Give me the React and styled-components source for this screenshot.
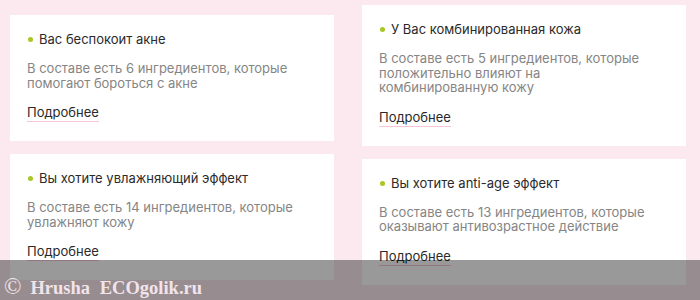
import React from "react";
import styled, { createGlobalStyle } from "styled-components";

const GlobalStyle = createGlobalStyle`
  html, body {
    margin: 0;
    padding: 0;
    background: #fce9ef;
  }
  body {
    font-family: Inter, "Noto Sans", sans-serif;
  }
`;

const Page = styled.div`
  position: relative;
  width: 700px;
  height: 300px;
  overflow: hidden;
  display: flex;
  gap: 28px;
  padding-left: 10px;
  box-sizing: border-box;
`;

const Column = styled.div`
  display: flex;
  flex-direction: column;
  gap: 13px;
  width: 324px;
  padding-top: ${(p) => p.$offset}px;
`;

const Card = styled.article`
  background: #fff;
  padding: 17px 17px 19px;
  display: flex;
  flex-direction: column;
  align-items: flex-start;
`;

const Title = styled.h3`
  margin: 0;
  display: flex;
  align-items: center;
  gap: 6px;
  font-size: 13px;
  line-height: 15px;
  font-weight: 400;
  color: #2a2a2a;

  &:before {
    content: "";
    width: 5px;
    height: 5px;
    border-radius: 50%;
    background: #a6c825;
    margin-left: 1px;
  }
`;

const Text = styled.p`
  margin: 14px 0 0;
  max-width: 280px;
  font-size: 13px;
  line-height: 14.5px;
  color: #858585;
`;

const More = styled.a`
  margin-top: 15px;
  padding-bottom: 1px;
  font-size: 13px;
  line-height: 15px;
  color: #2a2a2a;
  text-decoration: none;
  border-bottom: 1px solid #f7c5d6;
`;

const Watermark = styled.div`
  position: absolute;
  left: 0;
  right: 0;
  bottom: 0;
  height: 40px;
  background: rgba(0, 0, 0, 0.4);
  display: flex;
  align-items: baseline;
  gap: 9px;
  padding: 17px 0 0 4px;
  box-sizing: border-box;
  font-family: "Liberation Serif", serif;
  font-weight: bold;
  font-size: 18.5px;
  line-height: 19px;
  word-spacing: 5px;
  color: #f2e4ea;
`;

const Copy = styled.span`
  font-size: 23px;
  font-weight: normal;
`;

const left = [
  {
    title: "Вас беспокоит акне",
    text: "В составе есть 6 ингредиентов, которые помогают бороться с акне",
  },
  {
    title: "Вы хотите увлажняющий эффект",
    text: "В составе есть 14 ингредиентов, которые увлажняют кожу",
  },
];

const right = [
  {
    title: "У Вас комбинированная кожа",
    text: "В составе есть 5 ингредиентов, которые положительно влияют на комбинированную кожу",
  },
  {
    title: "Вы хотите anti-age эффект",
    text: "В составе есть 13 ингредиентов, которые оказывают антивозрастное действие",
  },
];

const InfoCard = ({ title, text }) => (
  <Card>
    <Title>{title}</Title>
    <Text>{text}</Text>
    <More href="#">Подробнее</More>
  </Card>
);

export default function App() {
  return (
    <>
      <GlobalStyle />
      <Page>
        <Column $offset={15}>
          {left.map((c) => (
            <InfoCard key={c.title} {...c} />
          ))}
        </Column>
        <Column $offset={5}>
          {right.map((c) => (
            <InfoCard key={c.title} {...c} />
          ))}
        </Column>
        <Watermark>
          <Copy>©</Copy>
          <span>Hrusha ECOgolik.ru</span>
        </Watermark>
      </Page>
    </>
  );
}
